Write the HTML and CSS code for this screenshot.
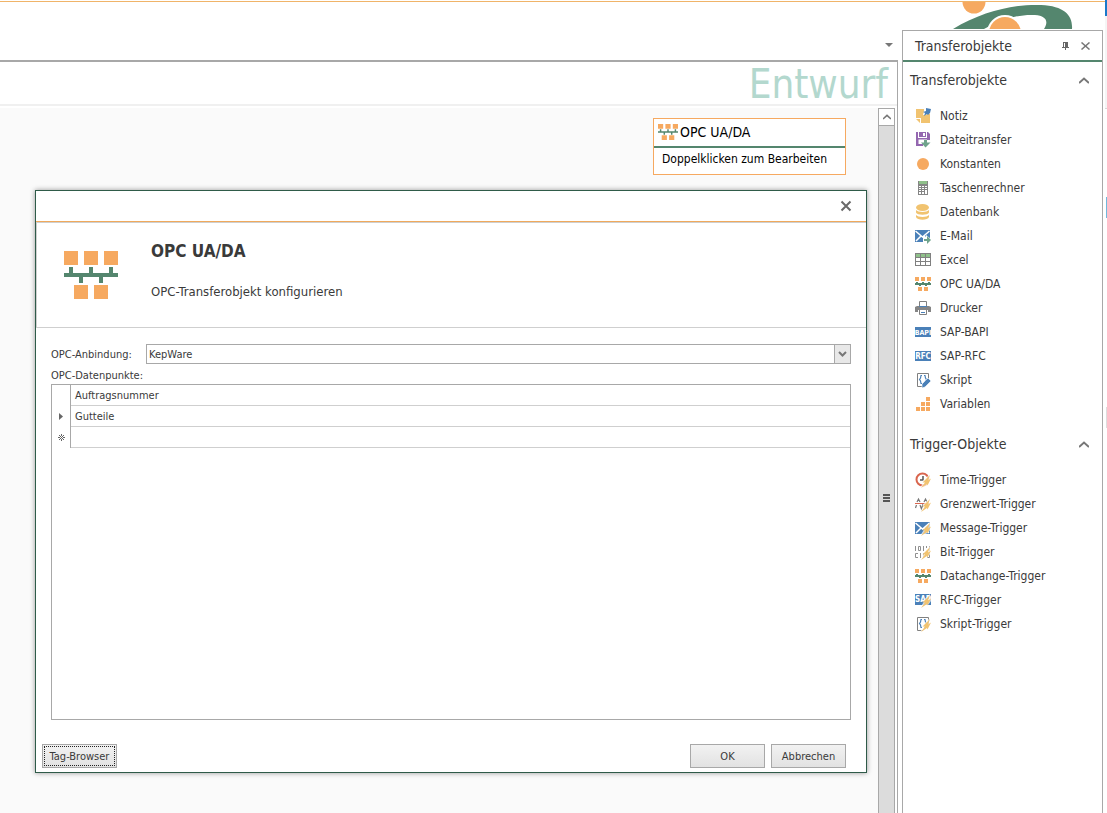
FILE: index.html
```html
<!DOCTYPE html>
<html lang="de">
<head>
<meta charset="utf-8">
<title>Transferobjekte</title>
<link rel="stylesheet" href="styles.css">
</head>
<body>
<svg class="defs" aria-hidden="true">
  <symbol id="opc" viewBox="0 0 54 48" preserveAspectRatio="none">
    <path fill="#f6a960" d="M0 0h14v14H0zM20 0h14v14H20zM40 0h14v14H40zM10 34h14v14H10zM30 34h14v14H30z"/>
    <path fill="#54866e" d="M5 16h4v6h16v-6h4v6h16v-6h4v6h5v4H39v6h-4v-6H19v6h-4v-6H0v-4h5z"/>
  </symbol>
  <symbol id="opc-small" viewBox="0 0 16 16">
    <path fill="#f6a960" d="M0 1h4v4H0zM6 1h4v4H6zM12 1h4v4h-4zM3 11h4v4H3zM9 11h4v4H9z"/>
    <path fill="#54866e" d="M1 6h2v1h4V6h2v1h4V6h2v1h1v2h-4v1h-2V9H6v1H4V9H0V7h1z"/>
  </symbol>
  <symbol id="bolt" viewBox="0 0 16 16"><path fill="#fff" d="M15 2L7 9.500h2L5 16l8-3 3-4z" opacity=".7"/><path fill="#f1c370" d="M15 3L7.500 10.500H10L6 16l6-4 .5 1.500L16 6.500l-3 2z"/></symbol>
  <symbol id="mail" viewBox="0 0 16 16"><path fill="#4a80b8" d="M0 2h15v12H0z"/><path fill="none" stroke="#fff" stroke-width="1.500" d="M.5 3l7 6 7-6M1 13l5-5M14 13L9 8"/></symbol>
  <symbol id="script" viewBox="0 0 16 16"><path fill="none" stroke="#808080" d="M8 14.500H2.500v-13h11V8"/><path fill="none" stroke="#4a80b8" stroke-width="1.200" d="M7 3.500H6L5.500 6 4.500 7.500 5.500 9 6 11.500h1M9 3.500h1l.5 2.500 1 1.500-1 1.500-.5 2.500H9"/></symbol>
  <symbol id="chev" viewBox="0 0 10 7"><path fill="none" stroke="#777" stroke-width="2" d="M0 6l5-4.500L10 6"/></symbol>
</svg>
<div class="app">
  <header class="topbar">
    <svg class="logo" width="120" height="27" viewBox="0 0 120 27" aria-hidden="true">
      <path fill="#54866e" d="M0 27C30 9 62 2 88 3c24 1 32 11 31 24H91c5-8 2-13-9-14-18-1-34 5-51 14z"/>
      <circle cx="21" cy="0" r="11.500" fill="#f6a960"/>
      <circle cx="52" cy="31" r="18" fill="#fff"/>
      <circle cx="52" cy="31" r="16" fill="#f6a960"/>
    </svg>
  </header>
  <div class="workspace">
    <main class="main">
      <div class="tabs"><button class="icon-btn" aria-label="Fensterliste"><svg width="8" height="4" viewBox="0 0 8 4"><path fill="#777" d="M0 0h8L4 4z"/></svg></button></div>
      <section class="doc">
        <h1 class="doc-title">Entwurf</h1>
        <div class="doc-body">
          <div class="canvas">
            <article class="node">
              <h2 class="node-title"><svg width="20" height="16"><use href="#opc"/></svg>OPC UA/DA</h2>
              <p class="node-text">Doppelklicken zum Bearbeiten</p>
            </article>
            <div class="dialog" role="dialog" aria-labelledby="dlg-title">
              <div class="dialog-bar"><button class="icon-btn" aria-label="Schließen"><svg width="12" height="12" viewBox="0 0 12 12"><path stroke="#6a6a6a" stroke-width="2" d="M1.500 1.500l9 9M10.500 1.500l-9 9"/></svg></button></div>
              <div class="dialog-head">
                <svg width="54" height="48"><use href="#opc"/></svg>
                <div class="dialog-heading">
                  <h2 id="dlg-title" class="dialog-title">OPC UA/DA</h2>
                  <p class="dialog-sub">OPC-Transferobjekt konfigurieren</p>
                </div>
              </div>
              <div class="dialog-body">
                <div class="field">
                  <label for="conn">OPC-Anbindung:</label>
                  <div class="combo">
                    <select id="conn"><option>KepWare</option></select>
                    <span class="combo-arrow"><svg width="9" height="7" viewBox="0 0 9 7"><path fill="none" stroke="#777" stroke-width="2" d="M1 1l3.500 3.500L8 1"/></svg></span>
                  </div>
                </div>
                <p class="grid-label" id="points">OPC-Datenpunkte:</p>
                <div class="grid-box">
                  <table class="grid" aria-labelledby="points">
                    <tr><th></th><td>Auftragsnummer</td></tr>
                    <tr><th><svg width="4" height="7" viewBox="0 0 4 7"><path fill="#666" d="M0 0l4 3.500L0 7z"/></svg></th><td>Gutteile</td></tr>
                    <tr><th><svg width="7" height="7" viewBox="0 0 7 7"><path stroke="#666" fill="none" d="M3.500 0v2M3.500 5v2M0 3.500h2M5 3.500h2M1 1l5 5M6 1L1 6"/></svg></th><td></td></tr>
                  </table>
                </div>
              </div>
              <div class="dialog-foot">
                <button class="btn focused">Tag-Browser</button>
                <span class="spacer"></span>
                <button class="btn">OK</button>
                <button class="btn">Abbrechen</button>
              </div>
            </div>
          </div>
          <div class="scroll">
            <button class="scroll-up" aria-label="Nach oben"><svg width="8" height="6"><use href="#chev"/></svg></button>
            <div class="scroll-thumb"><svg width="7" height="8" viewBox="0 0 7 8"><path fill="#555" d="M0 0h7v2H0zM0 3h7v2H0zM0 6h7v2H0z"/></svg></div>
          </div>
        </div>
      </section>
    </main>
    <aside class="panel">
      <div class="panel-head">
        <h2 class="panel-title">Transferobjekte</h2>
        <button class="icon-btn" aria-label="Anheften"><svg width="7" height="8" viewBox="0 0 7 8"><path fill="#666" d="M1 0h5v5h1v1H4v2H3V6H0V5h1z"/><path fill="#fff" d="M2 1h1v4H2z"/></svg></button>
        <button class="icon-btn" aria-label="Schließen"><svg width="9" height="8" viewBox="0 0 9 8"><path stroke="#777" stroke-width="1.500" d="M.5.5l8 7M8.500.5l-8 7"/></svg></button>
      </div>
      <section class="group">
        <h3 class="group-title">Transferobjekte<button class="icon-btn" aria-label="Einklappen"><svg width="10" height="7"><use href="#chev"/></svg></button></h3>
        <ul class="items">
          <li><svg viewBox="0 0 16 16"><path fill="#f1c370" d="M1 1h8v2L8 7h3l1-1h3v9H6v-5H1z"/><path fill="#f1c370" d="M1 11h4v4z"/><path fill="#4a80b8" d="M11 0l5 1-1 4-2 2-1-1-3 2 1-3-2-1 3-1z"/></svg>Notiz</li>
          <li><svg viewBox="0 0 16 16"><path fill="#9467b0" d="M1 0h2v6h9V0h1l2 2v6h-3V7.500H3.500V12H7v2H1z"/><path fill="#9467b0" d="M4 0h7v5H4zM1 12h7v2H1z"/><path fill="#fff" d="M8 1h2v3H8z"/><path fill="#6fa38c" d="M9 8h3v2.500h3.500L10.500 15.500 6 10.500h3z"/></svg>Dateitransfer</li>
          <li><svg viewBox="0 0 16 16"><circle cx="8" cy="8" r="6" fill="#f6a960"/></svg>Konstanten</li>
          <li><svg viewBox="0 0 16 16"><path fill="#858585" d="M3 1h10v14H3z"/><path fill="#8fc08a" d="M4 1h8v3H4z"/><path fill="#fff" d="M4 6h2v1H4zM7 6h2v1H7zM10 6h2v1h-2zM4 8h2v1H4zM7 8h2v1H7zM10 8h2v1h-2zM4 10h2v1H4zM7 10h2v1H7zM4 12h2v2H4zM7 12h2v2H7zM10 10h2v4h-2z"/></svg>Taschenrechner</li>
          <li><svg viewBox="0 0 16 16"><ellipse cx="7.500" cy="3.500" rx="6.500" ry="3.500" fill="#f1c370"/><path fill="#f1c370" d="M1 6c2 2.500 11 2.500 13 0v2.500c-1 3-12 3-13 0zM1 11c2 2.500 11 2.500 13 0v2c-1 3.500-12 3.500-13 0z"/></svg>Datenbank</li>
          <li><svg viewBox="0 0 16 16"><use href="#mail"/><path fill="#fff" d="M8 9h3V7l5 4v5H8z"/><path fill="#6fa38c" d="M9 11h3V8l4 4-4 4v-3H9z"/></svg>E-Mail</li>
          <li><svg viewBox="0 0 16 16"><path fill="#808080" d="M0 1h16v13H0z"/><path fill="#8fc08a" d="M1 2h4v3H1zM6 2h4v3H6zM11 2h4v3h-4z"/><path fill="#fff" d="M1 6h4v3H1zM6 6h4v3H6zM11 6h4v3h-4zM1 10h4v3H1zM6 10h4v3H6zM11 10h4v3h-4z"/></svg>Excel</li>
          <li><svg viewBox="0 0 16 16"><use href="#opc-small"/></svg>OPC UA/DA</li>
          <li><svg viewBox="0 0 16 16"><path fill="#fff" stroke="#808080" d="M4.500 6V1.500h7V6"/><path fill="#858585" d="M0 7l2-1h2v1h8V6h2l2 1v5h-3v-2H3v2H0z"/><path fill="#4a80b8" d="M4 6h8v1H4zM6 12h4v1H6z"/><path fill="none" stroke="#808080" d="M4.500 10v4.500h7V10"/></svg>Drucker</li>
          <li><svg viewBox="0 0 16 16"><path fill="#4a80b8" d="M0 3h16v10H0z"/><text class="badge" x="8" y="11">BAPI</text></svg>SAP-BAPI</li>
          <li><svg viewBox="0 0 16 16"><path fill="#4a80b8" d="M0 3h16v10H0z"/><text class="badge wide" x="8" y="11">RFC</text></svg>SAP-RFC</li>
          <li><svg viewBox="0 0 16 16"><use href="#script"/><path fill="#4a80b8" stroke="#fff" stroke-width=".6" d="M7 12l6-6 3 3-6 6-3 1z"/></svg>Skript</li>
          <li><svg viewBox="0 0 16 16"><path fill="#f6a960" d="M11 1h4v4h-4zM6 6h4v4H6zM11 6h4v4h-4zM1 11h4v4H1zM6 11h4v4H6zM11 11h4v4h-4z"/></svg>Variablen</li>
        </ul>
      </section>
      <section class="group">
        <h3 class="group-title">Trigger-Objekte<button class="icon-btn" aria-label="Einklappen"><svg width="10" height="7"><use href="#chev"/></svg></button></h3>
        <ul class="items">
          <li><svg viewBox="0 0 16 16"><circle cx="7.500" cy="7.500" r="6" fill="#fff" stroke="#d9654d" stroke-width="2"/><path fill="none" stroke="#555" stroke-width="1.500" d="M8 4v4H5"/><use href="#bolt"/></svg>Time-Trigger</li>
          <li><svg viewBox="0 0 16 16"><path fill="none" stroke="#777" stroke-width="1.200" d="M.5 12l1-3M2 6l1.500-3L5 6M5 9l1.500 4L8 8M9 6l1.500-3L12 6"/><path fill="#d9654d" d="M0 7h14v1H0z"/><use href="#bolt"/></svg>Grenzwert-Trigger</li>
          <li><svg viewBox="0 0 16 16"><use href="#mail"/><use href="#bolt"/></svg>Message-Trigger</li>
          <li><svg viewBox="0 0 16 16"><path fill="none" stroke="#909090" d="M.5 2v5M3.500 2.500h2v4h-2zM8.500 2v5M11.500 2v2M14.500 2v5M3 9.500H.5v4H3M5.500 9v5M8.500 9v5M12.500 9.500h2v4h-2z"/><use href="#bolt"/></svg>Bit-Trigger</li>
          <li><svg viewBox="0 0 16 16"><use href="#opc-small"/></svg>Datachange-Trigger</li>
          <li><svg viewBox="0 0 16 16"><path fill="#4a80b8" d="M0 2h16v11H0z"/><text class="badge wide" x="8" y="10">SAP</text><use href="#bolt"/></svg>RFC-Trigger</li>
          <li><svg viewBox="0 0 16 16"><use href="#script"/><use href="#bolt"/></svg>Skript-Trigger</li>
        </ul>
      </section>
    </aside>
  </div>
  <div class="edge" aria-hidden="true"><i class="edge-blue"></i><i class="edge-grey"></i><i class="edge-cyan"></i><i class="edge-mark"></i></div>
</div>
</body>
</html>
```
FILE: styles.css
```css
* { box-sizing: border-box; }
body { margin: 0; background: #fff; color: #3a3a3a; font: 12px "DejaVu Sans Condensed", "DejaVu Sans", sans-serif; }
h1, h2, h3, p, ul { margin: 0; padding: 0; font-weight: normal; }
svg { display: block; flex: none; }
.defs { position: absolute; width: 0; height: 0; }
.icon-btn { display: block; margin: 0; padding: 0; border: 0; background: none; }

.app { position: relative; display: flex; flex-direction: column; height: 100vh; overflow: hidden; }
.topbar { flex: none; display: flex; justify-content: flex-end; height: 30px; margin: 0 2px 0 0; padding: 1px 32px 0 0; background: linear-gradient(#fff 1px, #f0b469 1px, #f0b469 2px, #fff 2px); }
.logo { margin-top: 1px; }
.workspace { flex: 1; display: flex; gap: 4px; min-height: 0; padding-right: 4px; }
.main { flex: 1; display: flex; flex-direction: column; min-width: 0; }
.tabs { display: flex; align-items: center; justify-content: flex-end; height: 30px; padding-right: 5px; }
.doc { flex: 1; display: flex; flex-direction: column; min-height: 0; border-top: 2px solid #a8a8a8; border-right: 1px solid #a8a8a8; }
.doc-title { height: 44px; margin-bottom: 2px; padding-right: 9px; border-bottom: 2px solid #f0f0f0; color: #b3d8ce; font-size: 40px; line-height: 44px; text-align: right; }
.doc-body { flex: 1; display: flex; min-height: 0; padding-right: 2px; }
.canvas { position: relative; flex: 1; background: #fafafa; }
.scroll { display: flex; flex-direction: column; width: 17px; }
.scroll-up { display: flex; align-items: center; justify-content: center; height: 17px; padding: 0; border: 1px solid #a8a8a8; border-bottom: 0; background: #fff; }
.scroll-thumb { flex: 1; display: flex; align-items: center; justify-content: center; padding-top: 56px; border: 1px solid #a8a8a8; border-bottom: 0; background: #dcdcdc; }

.node { position: absolute; top: 10px; right: 32px; width: 193px; border: 1px solid #f6a960; background: #fff; color: #000; }
.node-title { display: flex; align-items: center; gap: 2px; height: 29px; padding: 0 4px 2px; border-bottom: 2px solid #54866e; font-size: 14px; }
.node-text { height: 26px; padding-left: 8px; font-size: 12px; line-height: 22px; }

.dialog { position: absolute; inset: 82px 11px 40px 35px; display: flex; flex-direction: column; border: 1px solid #2f5b49; background: #fff; box-shadow: 0 0 5px rgba(0, 0, 0, .4); font-size: 11px; }
.dialog-bar { display: flex; align-items: center; justify-content: flex-end; height: 31px; padding-right: 14px; border-bottom: 1px solid #f0a95c; }
.dialog-head { display: flex; align-items: center; gap: 33px; height: 106px; padding-left: 27px; border: 1px solid #cfcfcf; border-right: 0; }
.dialog-heading { padding-bottom: 8px; }
.dialog-title { font-size: 17px; font-weight: bold; line-height: 24px; }
.dialog-sub { margin-top: 17px; font-size: 13px; line-height: 24px; }
.dialog-body { flex: 1; display: flex; flex-direction: column; padding: 16px 15px 0; }
.field { display: flex; align-items: center; }
.field label { width: 95px; }
.combo { flex: 1; display: flex; height: 20px; border: 1px solid #a8a8a8; }
.combo select { flex: 1; appearance: none; padding: 0 2px; border: 0; background: #fff; color: inherit; font: inherit; }
.combo-arrow { display: flex; align-items: center; justify-content: center; width: 16px; border-left: 1px solid #a8a8a8; background: #e8e8e8; }
.grid-label { margin-top: 3px; line-height: 17px; }
.grid-box { flex: 1; border: 1px solid #a8a8a8; }
.grid { width: 100%; border-spacing: 0; }
.grid th, .grid td { height: 21px; padding: 0; }
.grid th { width: 19px; border-right: 1px solid #a8a8a8; }
.grid th svg { margin: 0 auto; }
.grid td { padding-left: 4px; border-bottom: 1px solid #cfcfcf; }
.dialog-foot { display: flex; gap: 6px; padding: 24px 20px 4px 6px; }
.spacer { flex: 1; }
.btn { width: 75px; height: 24px; padding: 0; border: 1px solid #a8a8a8; background: linear-gradient(#f2f2f2, #e2e2e2); color: inherit; font: inherit; }
.focused { outline: 1px dotted #222; outline-offset: -3px; }

.panel { width: 201px; border: solid #a8a8a8; border-width: 1px 1px 0; }
.panel-head { display: flex; align-items: center; gap: 12px; height: 31px; padding: 0 12px; border-bottom: 2px solid #54866e; }
.panel-title { flex: 1; font-size: 14px; }
.group { margin-bottom: 10px; }
.group-title { display: flex; align-items: center; justify-content: space-between; height: 36px; padding: 0 13px 0 7px; font-size: 14px; }
.items { padding: 6px 0 0 12px; list-style: none; font-size: 12px; }
.items li { display: flex; align-items: center; gap: 9px; height: 24px; }
.items svg { width: 16px; height: 16px; }
.badge { fill: #fff; font: bold 7px "DejaVu Sans Condensed", sans-serif; text-anchor: middle; }
.wide { font-size: 8px; }

.edge { position: absolute; top: 0; right: 0; display: flex; flex-direction: column; align-items: flex-end; width: 2px; }
.edge-blue { width: 2px; height: 16px; background: #1979ca; }
.edge-grey { width: 2px; height: 93px; border-bottom: 1px solid #d8d8d8; background: #f5f5f5; }
.edge-cyan { width: 1px; height: 21px; margin-top: 88px; background: #70b8dc; }
.edge-mark { width: 1px; height: 21px; margin-top: 189px; background: #ddd; }
```
